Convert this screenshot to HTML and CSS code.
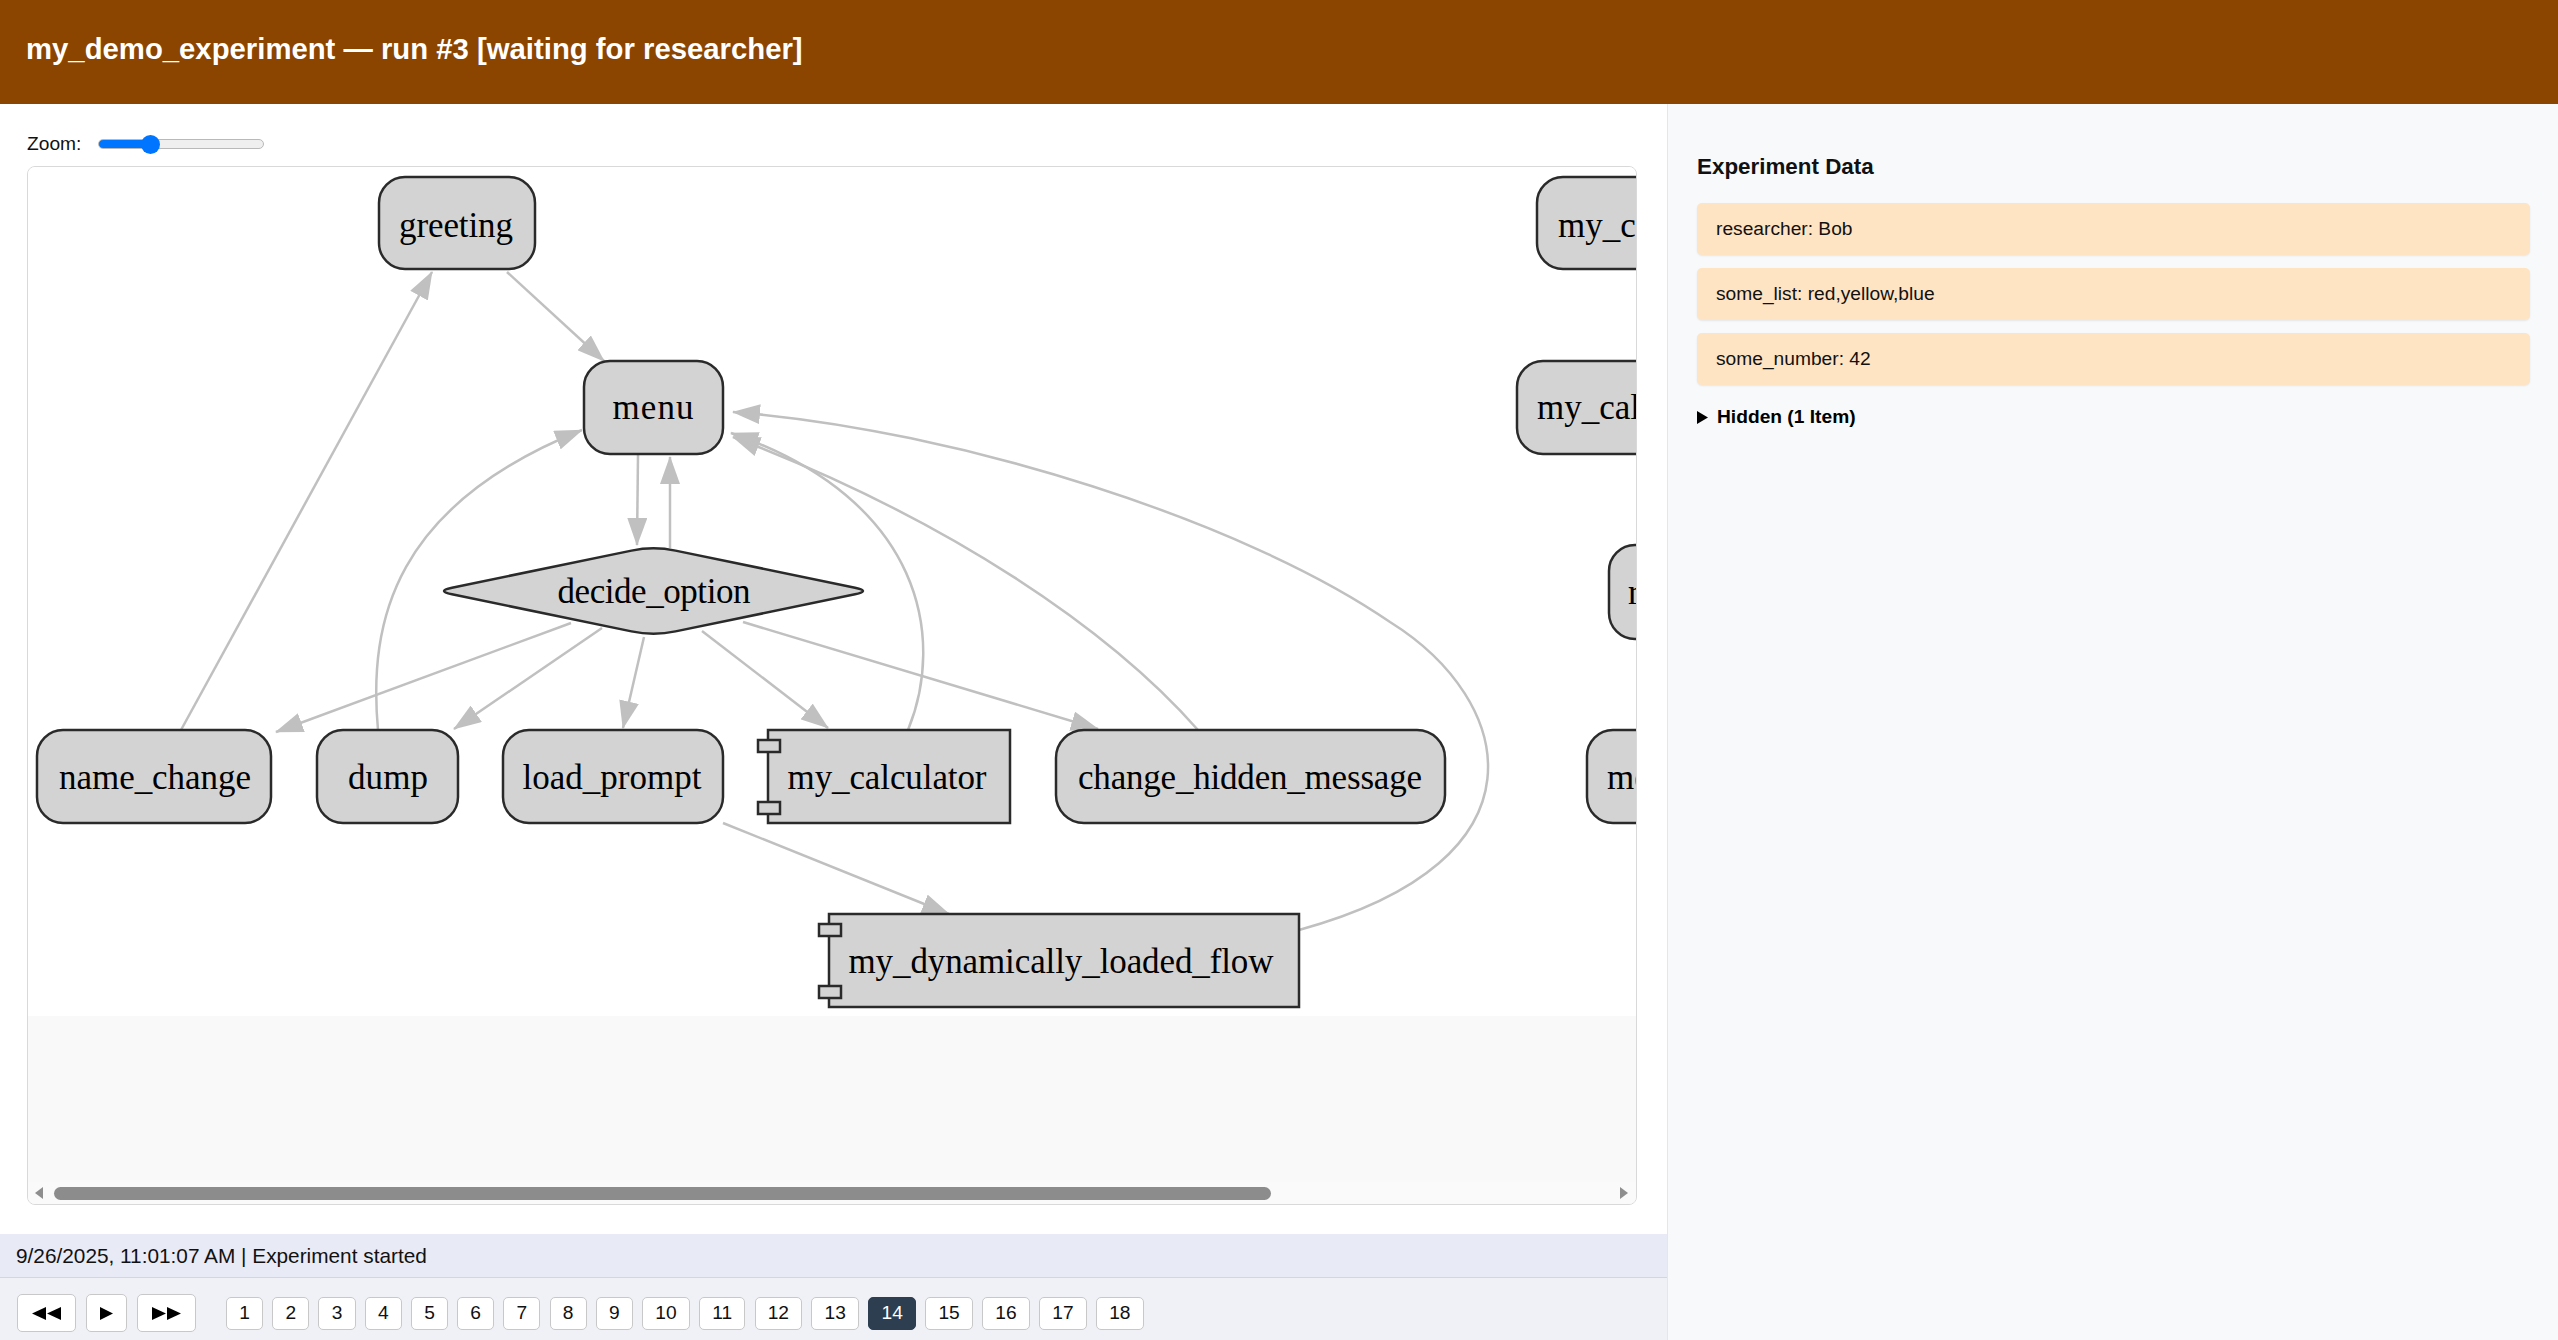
FILE: index.html
```html
<!DOCTYPE html>
<html lang="en">
<head>
<meta charset="utf-8">
<title>my_demo_experiment — run #3</title>
<link rel="stylesheet" href="styles.css">
</head>
<body>
<header class="topbar">
  <h1 class="title">my_demo_experiment — run #3 [waiting for researcher]</h1>
</header>
<div class="layout">
  <main class="main">
    <section class="workspace">
      <div class="zoom-row">
        <label class="zoom-label" for="zoom">Zoom:</label>
        <input class="zoom-range" id="zoom" type="range" min="0" max="100" value="29">
      </div>
      <div class="graph-box">
        <div class="graph-viewport">
          <svg class="graph" width="1900" height="849" viewBox="28 167 1900 849" xmlns="http://www.w3.org/2000/svg">
            <defs>
              <marker id="ah" markerUnits="userSpaceOnUse" markerWidth="28" markerHeight="20" refX="27" refY="10" orient="auto">
                <path d="M0,0 L28,10 L0,20 Z" fill="#c0c0c0"/>
              </marker>
            </defs>
            <g class="edges">
              <path d="M507,272 L604,361" marker-end="url(#ah)"/>
              <path d="M181,730 L432,272" marker-end="url(#ah)"/>
              <path d="M638,455 L637,545" marker-end="url(#ah)"/>
              <path d="M670,548 L670,457" marker-end="url(#ah)"/>
              <path d="M378,730 C368,620 395,505 582,430" marker-end="url(#ah)"/>
              <path d="M908,730 C945,640 925,500 731,433" marker-end="url(#ah)"/>
              <path d="M1198,730 C1110,630 950,520 733,437" marker-end="url(#ah)"/>
              <path d="M1299,930 C1555,860 1515,700 1390,622 C1245,522 960,430 733,412" marker-end="url(#ah)"/>
              <path d="M571,623 L276,732" marker-end="url(#ah)"/>
              <path d="M602,628 L454,729" marker-end="url(#ah)"/>
              <path d="M644,637 L623,728" marker-end="url(#ah)"/>
              <path d="M702,631 L828,728" marker-end="url(#ah)"/>
              <path d="M743,622 L1098,729" marker-end="url(#ah)"/>
              <path d="M723,823 L949,914" marker-end="url(#ah)"/>
            </g>
            <g class="nodes">
              <rect x="379" y="177" width="156" height="92" rx="26"/>
              <text x="456" y="237" textLength="114">greeting</text>

              <rect x="584" y="361" width="139" height="93" rx="26"/>
              <text x="653" y="419" textLength="81">menu</text>

              <path d="M452,587.7 L631.5,550.6 Q653.5,546 675.5,550.6 L855,587.7 Q871,591 855,594.3 L675.5,631.4 Q653.5,636 631.5,631.4 L452,594.3 Q436,591 452,587.7 Z"/>
              <text x="654" y="603" textLength="193">decide_option</text>

              <rect x="37" y="730" width="234" height="93" rx="26"/>
              <text x="155" y="789" textLength="192">name_change</text>

              <rect x="317" y="730" width="141" height="93" rx="26"/>
              <text x="388" y="789" textLength="80">dump</text>

              <rect x="503" y="730" width="220" height="93" rx="26"/>
              <text x="612" y="789" textLength="179">load_prompt</text>

              <rect x="768" y="730" width="242" height="93"/>
              <rect x="758" y="740" width="22" height="12"/>
              <rect x="758" y="802" width="22" height="12"/>
              <text x="887" y="789" textLength="199">my_calculator</text>

              <rect x="1056" y="730" width="389" height="93" rx="28"/>
              <text x="1250" y="789" textLength="344">change_hidden_message</text>

              <rect x="829" y="914" width="470" height="93"/>
              <rect x="819" y="924" width="22" height="12"/>
              <rect x="819" y="986" width="22" height="12"/>
              <text x="1061" y="973" textLength="425">my_dynamically_loaded_flow</text>

              <rect x="1537" y="177" width="320" height="92" rx="26"/>
              <text class="start" x="1558" y="237">my_counter</text>

              <rect x="1517" y="361" width="320" height="93" rx="26"/>
              <text class="start" x="1537" y="419">my_calculator</text>

              <rect x="1609" y="545" width="220" height="94" rx="26"/>
              <text class="start" x="1628" y="604">result</text>

              <rect x="1587" y="730" width="250" height="93" rx="26"/>
              <text class="start" x="1607" y="789">menu</text>
            </g>
          </svg>
        </div>
        <div class="graph-filler"></div>
        <div class="hscroll">
          <span class="hs-arrow hs-left"></span>
          <span class="hs-thumb"></span>
          <span class="hs-arrow hs-right"></span>
        </div>
      </div>
    </section>
    <div class="status">9/26/2025, 11:01:07 AM | Experiment started</div>
    <nav class="steps">
      <div class="transport">
        <button class="tbtn" type="button" aria-label="Back">
          <svg width="29" height="13" viewBox="0 0 29 13"><polygon points="14,0 14,13 0,6.5"/><polygon points="29,0 29,13 15,6.5"/></svg>
        </button>
        <button class="tbtn" type="button" aria-label="Play">
          <svg width="13" height="13" viewBox="0 0 13 13"><polygon points="0,0 13,6.5 0,13"/></svg>
        </button>
        <button class="tbtn" type="button" aria-label="Forward">
          <svg width="29" height="13" viewBox="0 0 29 13"><polygon points="0,0 14,6.5 0,13"/><polygon points="15,0 29,6.5 15,13"/></svg>
        </button>
      </div>
      <div class="pages">
        <button class="pbtn" type="button">1</button>
        <button class="pbtn" type="button">2</button>
        <button class="pbtn" type="button">3</button>
        <button class="pbtn" type="button">4</button>
        <button class="pbtn" type="button">5</button>
        <button class="pbtn" type="button">6</button>
        <button class="pbtn" type="button">7</button>
        <button class="pbtn" type="button">8</button>
        <button class="pbtn" type="button">9</button>
        <button class="pbtn" type="button">10</button>
        <button class="pbtn" type="button">11</button>
        <button class="pbtn" type="button">12</button>
        <button class="pbtn" type="button">13</button>
        <button class="pbtn active" type="button">14</button>
        <button class="pbtn" type="button">15</button>
        <button class="pbtn" type="button">16</button>
        <button class="pbtn" type="button">17</button>
        <button class="pbtn" type="button">18</button>
      </div>
    </nav>
  </main>
  <aside class="panel">
    <h2 class="panel-title">Experiment Data</h2>
    <div class="data-item">researcher: Bob</div>
    <div class="data-item">some_list: red,yellow,blue</div>
    <div class="data-item">some_number: 42</div>
    <details class="hidden-group">
      <summary class="hidden-summary"><svg class="caret" width="11" height="13" viewBox="0 0 11 13"><polygon points="0,0 11,6.5 0,13"/></svg><span>Hidden (1 Item)</span></summary>
    </details>
  </aside>
</div>
</body>
</html>
```

FILE: styles.css
```css
* { box-sizing: border-box; }
html, body { margin: 0; padding: 0; }
body {
  width: 2558px;
  height: 1340px;
  overflow: hidden;
  font-family: "Liberation Sans", Arial, sans-serif;
  color: #111;
  background: #fff;
}

.topbar {
  height: 104px;
  background: #8b4500;
  display: flex;
  align-items: center;
  padding: 0 26px 6px;
}
.title {
  margin: 0;
  font-size: 29.3px;
  font-weight: 700;
  line-height: 1;
  color: #fff;
}

.layout { display: flex; height: 1236px; }

.main {
  width: 1667px;
  flex: none;
  display: flex;
  flex-direction: column;
  background: #fff;
}
.workspace {
  flex: 1;
  padding: 28px 30px 0 27px;
}

.zoom-row {
  display: flex;
  align-items: center;
  gap: 17px;
  height: 24px;
  margin-bottom: 10px;
}
.zoom-label { font-size: 19.2px; color: #111; }
.zoom-range {
  -webkit-appearance: none;
  appearance: none;
  width: 166px;
  height: 19px;
  margin: 0;
  background: transparent;
}
.zoom-range::-webkit-slider-runnable-track {
  height: 10px;
  border-radius: 5px;
  border: 1px solid #b9b9b9;
  background: linear-gradient(to right, #0075ff 0, #0075ff 31%, #efefef 31%, #efefef 100%);
}
.zoom-range::-webkit-slider-thumb {
  -webkit-appearance: none;
  width: 19px;
  height: 19px;
  margin-top: -5.5px;
  border: none;
  border-radius: 50%;
  background: #0075ff;
}

.graph-box {
  width: 1610px;
  height: 1039px;
  border: 1px solid #d9d9d9;
  border-radius: 8px;
  background: #f9f9f9;
  overflow: hidden;
  display: flex;
  flex-direction: column;
}
.graph-viewport {
  flex: none;
  height: 849px;
  overflow: hidden;
  background: #fff;
}
.graph { display: block; }
.graph .edges path {
  fill: none;
  stroke: #c0c0c0;
  stroke-width: 2.5;
}
.graph .nodes rect,
.graph .nodes path {
  fill: #d3d3d3;
  stroke: #2a2a2a;
  stroke-width: 2.5;
}
.graph .nodes text {
  font-family: "Liberation Serif", "Times New Roman", serif;
  font-size: 35px;
  fill: #000;
  text-anchor: middle;
}
.graph .nodes text.start { text-anchor: start; }

.graph-filler { flex: 1; }

.hscroll {
  flex: none;
  height: 22px;
  display: flex;
  align-items: center;
  padding: 0 8px 0 7px;
  background: #fafafa;
}
.hs-arrow {
  width: 0;
  height: 0;
  border-top: 6px solid transparent;
  border-bottom: 6px solid transparent;
}
.hs-left { border-right: 8px solid #8e8e8e; }
.hs-right { border-left: 8px solid #8e8e8e; margin-left: auto; }
.hs-thumb {
  margin-left: 11px;
  width: 1217px;
  height: 13px;
  border-radius: 7px;
  background: #8c8c8c;
}

.status {
  flex: none;
  height: 44px;
  background: #e8eaf6;
  border-bottom: 1px solid #d3d6df;
  display: flex;
  align-items: center;
  padding: 0 16px;
  font-size: 20.8px;
  color: #111;
}

.steps {
  flex: none;
  height: 62px;
  background: #eff1f6;
  display: flex;
  align-items: center;
  padding: 8px 17px 0;
  gap: 30px;
}
.transport, .pages { display: flex; align-items: center; }
.transport { gap: 10px; }
.pages { gap: 9.2px; }

.tbtn {
  height: 38px;
  padding: 0;
  display: flex;
  align-items: center;
  justify-content: center;
  background: #fff;
  border: 1px solid #c8c8c8;
  border-radius: 5px;
  font: inherit;
}
.tbtn svg { display: block; fill: #000; }
.tbtn:nth-child(1), .tbtn:nth-child(3) { width: 59px; }
.tbtn:nth-child(2) { width: 41px; }

.pbtn {
  height: 33px;
  padding: 0 12.2px;
  background: #fff;
  border: 1px solid #c8c8c8;
  border-radius: 5px;
  font-family: "Liberation Sans", Arial, sans-serif;
  font-size: 19.2px;
  color: #111;
}
.pbtn.active {
  background: #2c3e50;
  border-color: #2c3e50;
  color: #fff;
}

.panel {
  flex: 1;
  background: #f7f9fb;
  border-left: 1px solid #e3e6eb;
  padding: 50px 28px 0 29px;
}
.panel-title {
  margin: 0 0 23px;
  font-size: 22.4px;
  line-height: 26px;
  font-weight: 700;
  color: #111;
}
.data-item {
  height: 52px;
  margin-bottom: 13px;
  padding: 0 19px;
  display: flex;
  align-items: center;
  background: #ffe4c4;
  border-radius: 5px;
  box-shadow: 0 1px 2px rgba(0, 0, 0, 0.08);
  font-size: 19.2px;
  color: #111;
}
.hidden-group { margin-top: 20px; }
.hidden-summary {
  list-style: none;
  display: flex;
  align-items: center;
  gap: 9px;
  font-size: 19.2px;
  line-height: 24px;
  font-weight: 700;
  color: #000;
  cursor: pointer;
}
.hidden-summary::-webkit-details-marker { display: none; }
.caret { display: block; flex: none; fill: #000; }
```
